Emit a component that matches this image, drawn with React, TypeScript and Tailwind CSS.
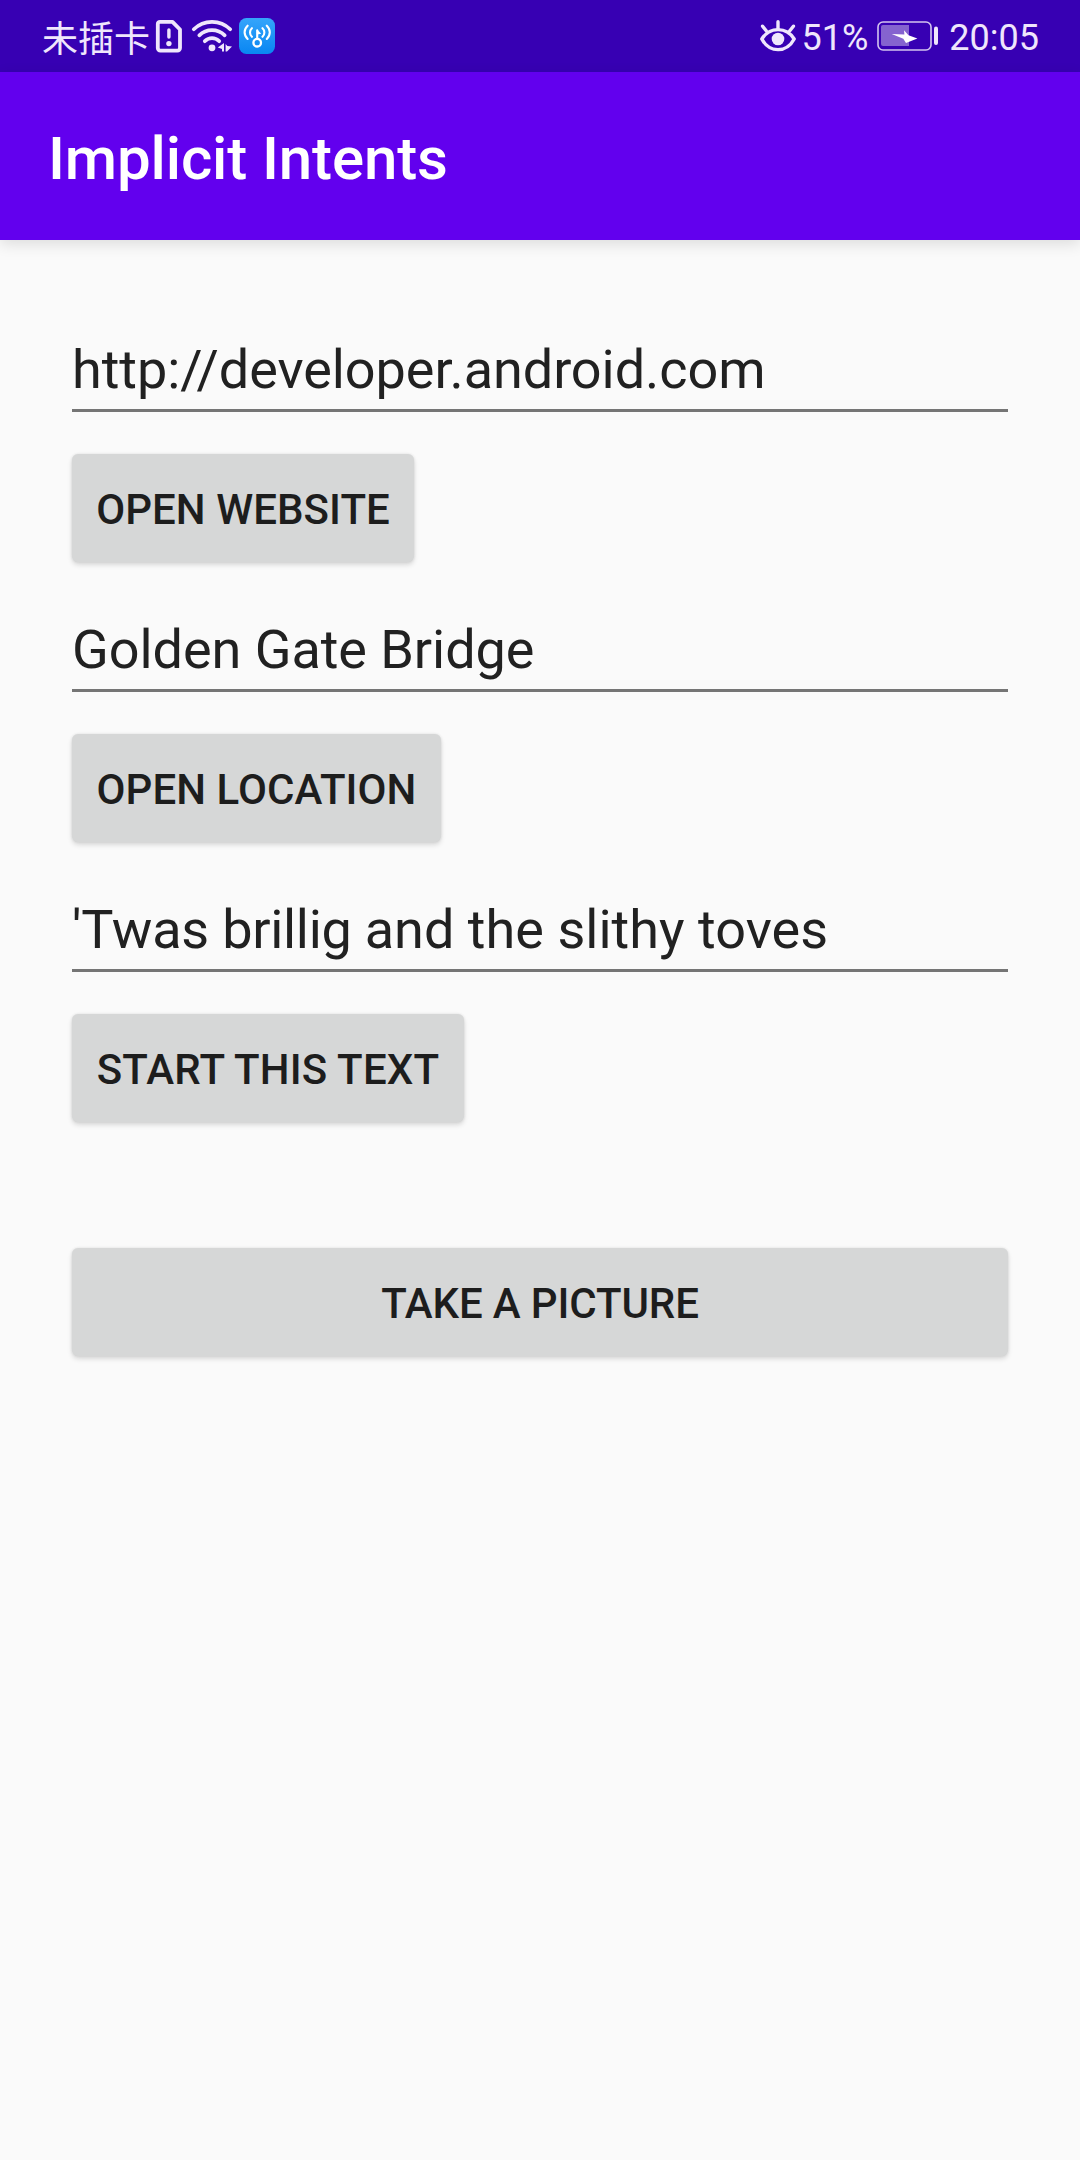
import React from "react";

function SimIcon() {
  return (
    <svg className="ml-[6px] h-[34px] w-[28px] shrink-0" viewBox="0 0 28 34" fill="none" stroke="#efe6fc" strokeWidth="3.8" strokeLinejoin="round" strokeLinecap="round">
      <path d="M5 2.8h12.5L25 10.5V29a2.6 2.6 0 0 1-2.6 2.6H5.4A2.6 2.6 0 0 1 2.8 29V5A2.2 2.2 0 0 1 5 2.8Z" />
      <path d="M13.9 11v7" strokeWidth="3.4" />
      <circle cx="13.9" cy="24.6" r="2.7" fill="#efe6fc" stroke="none" />
    </svg>
  );
}

function WifiIcon() {
  return (
    <svg className="ml-[8px] h-[34px] w-[42px] shrink-0" viewBox="0 0 42 34" fill="none" stroke="#efe6fc" strokeWidth="3.7" strokeLinecap="round">
      <path d="M2.8 10.3C12.8.4 29.2.4 39.2 10.3" />
      <path d="M8.3 16.3C15.4 9.4 26.6 9.4 33.7 16.3" />
      <path d="M13.8 22.2C18 18.2 24 18.2 28.2 22.2" />
      <circle cx="21" cy="28.8" r="3.4" fill="#efe6fc" stroke="none" />
      <path d="M26.8 28.6 33 24V32.6H31V30Z M34.6 25 36.4 27 41 27.4 36 32.6H34.6Z" fill="#efe6fc" stroke="none" />
    </svg>
  );
}

function HotspotIcon() {
  return (
    <svg className="ml-[6px] h-[36px] w-[36px] shrink-0" viewBox="0 0 36 36" fill="none" stroke="#fff" strokeWidth="2.1" strokeLinecap="round">
      <defs>
        <linearGradient id="tile" x1="0" y1="0" x2="0" y2="1">
          <stop offset="0" stopColor="#35a5fb" />
          <stop offset="1" stopColor="#0986f2" />
        </linearGradient>
      </defs>
      <rect width="36" height="36" rx="7.5" fill="url(#tile)" stroke="none" />
      <circle cx="18.2" cy="24.7" r="3.8" strokeWidth="2.3" />
      <path d="M18.2 20.6V12.2" strokeWidth="2.1" />
      <path d="M18.2 11.4 22.2 15.8 18.2 16.6Z" fill="#fff" stroke="none" />
      <path d="M12.9 10.2c-2.5 2.3-2.5 6.2 0 8.6M8.6 7.7c-4 3.8-4 9.3 0 13.2M23.5 10.2c2.5 2.3 2.5 6.2 0 8.6M27.8 7.7c4 3.8 4 9.3 0 13.2" />
    </svg>
  );
}

function EyeIcon() {
  return (
    <svg className="h-[32px] w-[36px] shrink-0" viewBox="0 0 36 32" fill="none" stroke="#efe6fc" strokeWidth="3.4" strokeLinecap="round" strokeLinejoin="round">
      <path d="M1.8 19C9.5 6.5 26.5 6.5 34.2 19 26.5 33.2 9.5 33.2 1.8 19Z" />
      <circle cx="18" cy="19" r="6.3" fill="#efe6fc" stroke="none" />
      <path d="M18 1.8v7M2.6 6.2l3.6 4.6M33.4 6.2l-3.6 4.6" />
    </svg>
  );
}

function BatteryIcon() {
  return (
    <svg className="ml-[9px] h-[30px] w-[62px] shrink-0" viewBox="0 0 62 30" fill="none">
      <rect x="1" y="1" width="53" height="28" rx="5" stroke="#d3c4ef" strokeWidth="1.6" />
      <path d="M6 4H32V25H6a2 2 0 0 1-2-2V6A2 2 0 0 1 6 4Z" fill="#8563cf" />
      <rect x="57" y="5.5" width="4" height="18.5" rx="2" fill="#efe6fc" />
      <path d="M27 9.2 31.5 14.2 40.4 17.6 29 22 26.3 17.8 14.7 13 27.4 13.6Z" fill="#fff" />
    </svg>
  );
}

function Field({ children }: { children: React.ReactNode }) {
  return (
    <div className="h-[80px] border-b-[3px] border-[#757575]">
      <div className="pt-[6px] text-[54px] leading-[64px] tracking-[-0.05px] whitespace-pre">{children}</div>
    </div>
  );
}

function Button({ label, className }: { label: string; className: string }) {
  return (
    <button
      className={`flex h-[108px] items-center justify-center rounded-[6px] bg-[#d6d7d7] pt-[2px] text-[42px] font-medium whitespace-nowrap text-[#1d1d1d] shadow-[0_3px_5px_rgba(0,0,0,0.13),0_0_3px_rgba(0,0,0,0.1)] ${className}`}
    >
      {label}
    </button>
  );
}

export default function App() {
  return (
    <div className="h-[2160px] w-[1080px] overflow-hidden bg-[#fafafa] font-['Roboto','Noto_Sans_CJK_SC',sans-serif] text-[#212121]">
      <header className="flex h-[72px] items-center justify-between bg-[#3700b3] pr-[41px] pl-[42px] text-[36px] leading-[70px] text-[#efe6fc]">
        <div className="flex items-center">
          <span className="w-[107px] font-['Noto_Sans_CJK_SC',sans-serif] whitespace-nowrap">未插卡</span>
          <SimIcon />
          <WifiIcon />
          <HotspotIcon />
        </div>
        <div className="flex items-center">
          <EyeIcon />
          <span className="ml-[6px] pt-[4px]">51%</span>
          <BatteryIcon />
          <span className="ml-[10px] pt-[4px]">20:05</span>
        </div>
      </header>
      <div className="h-[168px] bg-[#6200ee] pt-[51px] pl-[48px] text-[60px] leading-[72px] font-medium tracking-[-0.13px] text-white shadow-[0_4px_14px_rgba(0,0,0,0.12)]">
        Implicit Intents
      </div>
      <main className="flex flex-col px-[72px] pt-[92px]">
        <Field>http://developer.android.com</Field>
        <Button label="OPEN WEBSITE" className="mt-[42px] mb-[50px] w-[342px] tracking-[0.06px]" />
        <Field>Golden Gate Bridge</Field>
        <Button label="OPEN LOCATION" className="mt-[42px] mb-[50px] w-[369px] tracking-[0.08px]" />
        <Field>
          <span className="tracking-[-0.2px]">'Twas </span>
          <span className="tracking-[-0.3px]">brillig </span>
          <span className="tracking-[0.03px]">and the slithy toves</span>
        </Field>
        <Button label="START THIS TEXT" className="mt-[42px] w-[392px] tracking-[0.2px]" />
        <Button label="TAKE A PICTURE" className="mt-[126px] w-full tracking-[-0.12px]" />
      </main>
    </div>
  );
}
